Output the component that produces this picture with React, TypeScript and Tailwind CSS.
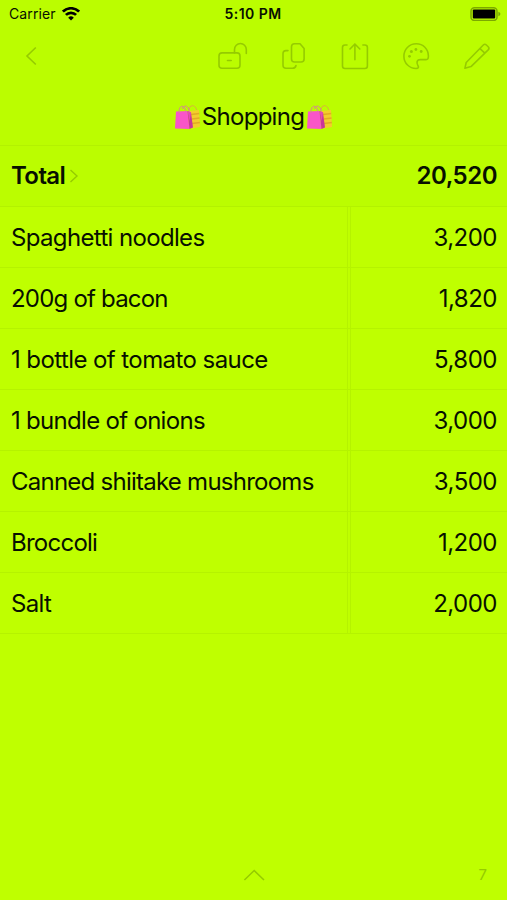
import type { ReactNode } from 'react';

const items = [
  { name: 'Spaghetti noodles', price: '3,200', tracking: 'tracking-[-0.65px]' },
  { name: '200g of bacon', price: '1,820', tracking: 'tracking-[-0.8px]' },
  { name: '1 bottle of tomato sauce', price: '5,800', tracking: 'tracking-[-0.58px]' },
  { name: '1 bundle of onions', price: '3,000', tracking: 'tracking-[-0.7px]' },
  { name: 'Canned shiitake mushrooms', price: '3,500', tracking: 'tracking-[-0.75px]' },
  { name: 'Broccoli', price: '1,200', tracking: 'tracking-[-0.75px]' },
  { name: 'Salt', price: '2,000', tracking: 'tracking-[-0.7px]' },
];

function ToolButton({ label, children }: { label: string; children: ReactNode }) {
  return (
    <button aria-label={label} className="flex w-[61px] items-center justify-center">
      <svg width="30" height="30" viewBox="0 0 30 30" fill="none" stroke="currentColor" strokeWidth="1.6" strokeLinecap="round" strokeLinejoin="round">
        {children}
      </svg>
    </button>
  );
}

function Bags() {
  return (
    <svg width="27" height="28" viewBox="0 0 27 28" fill="none">
      {/* yellow bag behind */}
      <path d="M14 8 25 7 26 24 18 25.5 14 22Z" fill="#f3cd2c" />
      <path d="M17 11.5 25.3 10.5M18 16 25.6 15M18 20.5 25.9 19.5" stroke="#e2aa24" strokeWidth="1.3" />
      <path d="M15 7C15 2 21 .5 22.7 7" stroke="#d8b43b" strokeWidth="1" />
      {/* pink bag in front */}
      <path d="M2 8.5 13.5 8 15.5 26 1 25.5Z" fill="#f955c8" />
      <path d="M13.5 8 17 9.5 19 24.5 15.5 26Z" fill="#c9359a" />
      <path d="M13.5 8 17 9.5 15.7 18Z" fill="#e549b5" />
      <path d="M5 10C4.5 2 10.5 .5 12 9M8.5 6C9.5 2 14 1.5 15.5 8.5" stroke="#d7829b" strokeWidth="1" />
    </svg>
  );
}

function StatusBar() {
  return (
    <div className="grid h-7 grid-cols-3 items-center text-[14px] leading-7">
      <div className="flex items-center gap-1.5 pl-[9px]">
        <span className="tracking-[0.1px]">Carrier</span>
        <svg width="18" height="14" viewBox="0 0 18 14" fill="none" stroke="#000" strokeWidth="2.7">
          <path d="M.9 4.6A11.5 11.5 0 0 1 17.1 4.6M3.9 7.9A7.2 7.2 0 0 1 14.1 7.9" />
          <path d="M9 13.5 6.2 10.7A4 4 0 0 1 11.8 10.7Z" fill="#000" stroke="none" />
        </svg>
      </div>
      <span className="pr-px text-center font-semibold tracking-[0.45px]">5:10 PM</span>
      <div className="flex justify-end pr-[6px] pb-px">
        <svg width="31" height="14" viewBox="0 0 31 14">
          <rect x="1" y=".8" width="26" height="12.6" rx="3.5" fill="none" stroke="#7ca900" strokeWidth="1.5" />
          <rect x="2.8" y="2.6" width="22.4" height="9" rx="1" fill="#000" />
          <path d="M28.4 4.8C31 5.6 31 8.4 28.4 9.2Z" fill="#7ca900" />
        </svg>
      </div>
    </div>
  );
}

function Toolbar() {
  return (
    <div className="flex h-14 justify-between text-[#95cb00]">
      <button aria-label="Back" className="flex w-[61px] items-center justify-center">
        <svg width="30" height="30" viewBox="0 0 30 30" fill="none" stroke="currentColor" strokeWidth="1.6">
          <path d="M19.8 6.5 11 15 19.8 23.5" />
        </svg>
      </button>
      <div className="flex">
        <ToolButton label="Unlock">
          <rect x="1" y="11.9" width="21" height="15.4" rx="3" />
          <path d="M9.5 19.5H13.2M16.5 11.9V8.5A5.9 6 0 0 1 28.3 8.5V12.5" />
        </ToolButton>
        <ToolButton label="Copy">
          <path d="M15.5 2.7H21L25.1 7.6V18Q25.1 21 22.1 21H15.5Q12.5 21 12.5 18V5.7Q12.5 2.7 15.5 2.7Z" />
          <path d="M9 9.6H7Q4 9.6 4 12.6V24.3Q4 27.3 7 27.3H13.5Q16.5 27.3 17 24.5" />
        </ToolButton>
        <ToolButton label="Share">
          <path d="M7 4H5Q2.5 4 2.5 6.5V25Q2.5 27.5 5 27.5H24.9Q27.4 27.5 27.4 25V6.5Q27.4 4 24.9 4H22.9" />
          <path d="M14.9 18.7V3M10 8 14.9 3 19.8 8" />
        </ToolButton>
        <ToolButton label="Theme">
          <path d="M15.3 2.8C8 2.8 2.9 8.4 2.9 15.2C2.9 22.4 8.6 27.5 15 27.5C17.7 27.5 17.9 26.2 17 24.8C15 21.3 16 18.6 19.3 18.6H25C27 18.6 27.5 17 27.4 14.8C27.2 8 22.2 2.8 15.3 2.8Z" />
          <g fill="currentColor" stroke="none">
            <circle cx="8.5" cy="15.3" r="1.4" />
            <circle cx="10.4" cy="10.4" r="1.5" />
            <circle cx="14.9" cy="8.5" r="1.4" />
            <circle cx="20.2" cy="10.5" r="1.4" />
          </g>
        </ToolButton>
        <ToolButton label="Edit">
          <path d="M2.9 27.3 4.2 21.5 21.3 4Q22.8 2.5 24.4 4L26.2 5.8Q27.7 7.3 26.2 8.9L9 25.6ZM18 7.6 22.8 12.2" />
        </ToolButton>
      </div>
    </div>
  );
}

export default function App() {
  return (
    <div className="flex h-[900px] w-[507px] flex-col overflow-hidden bg-[#bfff00] font-['Inter','Liberation_Sans',sans-serif] text-[#081000]">
      <header className="h-[146px] border-b border-[#b3f200] bg-[#bbfd00]">
        <StatusBar />
        <Toolbar />
        <h1 className="flex h-[64px] items-center justify-center pt-0.5 text-[24px] tracking-[-0.7px]">
          <Bags />
          <span className="mr-0.5 ml-px">Shopping</span>
          <Bags />
        </h1>
      </header>

      <main>
        <div className="flex h-[61px] items-center justify-between border-b border-[#b3f200] bg-[#bbfd00] pr-2.5 pl-[11px] text-[24px] font-semibold">
          <div className="flex items-center gap-1">
            <span className="tracking-[-0.6px]">Total</span>
            <svg width="10" height="16" viewBox="0 0 10 16" fill="none" stroke="#95cb00" strokeWidth="1.4">
              <path d="M1.5 2 8 8 1.5 14" />
            </svg>
          </div>
          <span className="tracking-[-0.5px]">20,520</span>
        </div>

        {items.map((item) => (
          <div key={item.name} className="flex h-[61px] border-b border-[#b5f300] text-[24px]">
            <div className={`flex flex-1 items-center pt-0.5 pl-[11px] whitespace-nowrap ${item.tracking}`}>{item.name}</div>
            <div className="w-1 border-x border-[#b5f300]" />
            <div className="flex w-[156px] items-center justify-end pt-0.5 pr-2.5 tracking-[-0.5px]">{item.price}</div>
          </div>
        ))}
      </main>

      <footer className="mt-auto grid h-[50px] grid-cols-3 items-center text-[#95cb00]">
        <span />
        <svg className="justify-self-center" width="22" height="14" viewBox="0 0 22 14" fill="none" stroke="currentColor" strokeWidth="1.6">
          <path d="M1.4 12 11.2 2.5 21 12" />
        </svg>
        <span className="justify-self-end pr-5 text-[15px]">7</span>
      </footer>
    </div>
  );
}
